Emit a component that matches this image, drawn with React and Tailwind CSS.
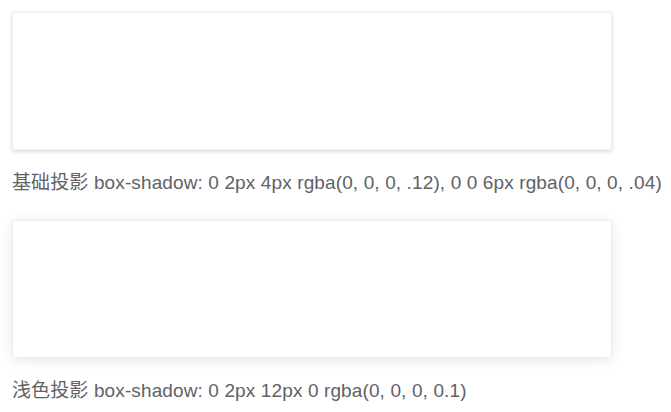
import React from "react";

const shadows = [
  {
    label: "基础投影",
    value: "box-shadow: 0 2px 4px rgba(0, 0, 0, .12), 0 0 6px rgba(0, 0, 0, .04)",
    cls: "shadow-[0_2px_4px_rgba(0,0,0,.12),0_0_6px_rgba(0,0,0,.04)]",
  },
  {
    label: "浅色投影",
    value: "box-shadow: 0 2px 12px 0 rgba(0, 0, 0, 0.1)",
    cls: "shadow-[0_2px_12px_0_rgba(0,0,0,0.1)]",
  },
];

export default function App() {
  return (
    <div
      className="min-h-screen bg-white px-3 pt-3 text-[19px] text-[#606266]"
      style={{ fontFamily: '"Liberation Sans", "Noto Sans CJK SC", sans-serif' }}
    >
      {shadows.map((item, index) => (
        <div key={index} className="mb-[23px]">
          <div
            className={
              "h-[138px] w-[600px] border border-[#eee] bg-white " + item.cls
            }
          />
          <p className="mt-[19px] whitespace-nowrap leading-[28px] tracking-[0.12px]">
            {item.label} {item.value}
          </p>
        </div>
      ))}
    </div>
  );
}
